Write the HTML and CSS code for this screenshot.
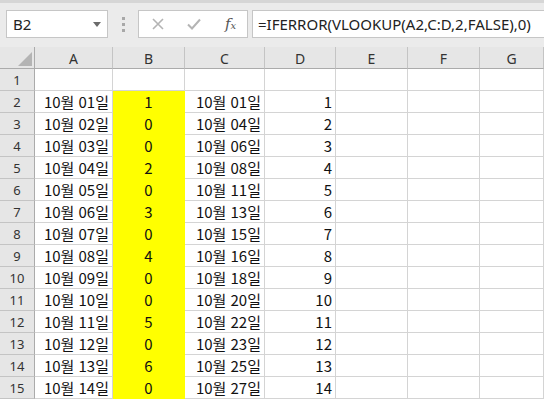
FILE: index.html
```html
<!DOCTYPE html>
<html lang="ko">
<head>
<meta charset="utf-8">
<link rel="stylesheet" href="styles.css">
</head>
<body>
<div class="app">
  <div class="toolbar">
    <div class="namebox"><span class="ref">B2</span><span class="caret"></span></div>
    <div class="dots"><i></i><i></i><i></i></div>
    <div class="fbtns">
      <svg class="ic" width="12" height="12" viewBox="0 0 12 12"><path d="M1 1L11 11M11 1L1 11" stroke="#b4b4b4" stroke-width="1.6" fill="none"/></svg>
      <svg class="ic" width="14" height="12" viewBox="0 0 14 12"><path d="M1 6.5L5 10.5L13 1.5" stroke="#b4b4b4" stroke-width="2" fill="none"/></svg>
      <span class="fx">f<sub>x</sub></span>
    </div>
    <div class="formula">=IFERROR(VLOOKUP(A2,C:D,2,FALSE),0)</div>
  </div>
  <div class="sheet" id="sheet">
    <div class="corner"><span class="tri"></span></div>
    <div class="ch">A</div><div class="ch">B</div><div class="ch">C</div><div class="ch">D</div><div class="ch">E</div><div class="ch">F</div><div class="ch">G</div>

    <div class="rh">1</div><div class="c"></div><div class="c"></div><div class="c"></div><div class="c"></div><div class="c"></div><div class="c"></div><div class="c"></div>
    <div class="rh">2</div><div class="c r">10월 01일</div><div class="c y">1</div><div class="c r">10월 01일</div><div class="c r">1</div><div class="c"></div><div class="c"></div><div class="c"></div>
    <div class="rh">3</div><div class="c r">10월 02일</div><div class="c y">0</div><div class="c r">10월 04일</div><div class="c r">2</div><div class="c"></div><div class="c"></div><div class="c"></div>
    <div class="rh">4</div><div class="c r">10월 03일</div><div class="c y">0</div><div class="c r">10월 06일</div><div class="c r">3</div><div class="c"></div><div class="c"></div><div class="c"></div>
    <div class="rh">5</div><div class="c r">10월 04일</div><div class="c y">2</div><div class="c r">10월 08일</div><div class="c r">4</div><div class="c"></div><div class="c"></div><div class="c"></div>
    <div class="rh">6</div><div class="c r">10월 05일</div><div class="c y">0</div><div class="c r">10월 11일</div><div class="c r">5</div><div class="c"></div><div class="c"></div><div class="c"></div>
    <div class="rh">7</div><div class="c r">10월 06일</div><div class="c y">3</div><div class="c r">10월 13일</div><div class="c r">6</div><div class="c"></div><div class="c"></div><div class="c"></div>
    <div class="rh">8</div><div class="c r">10월 07일</div><div class="c y">0</div><div class="c r">10월 15일</div><div class="c r">7</div><div class="c"></div><div class="c"></div><div class="c"></div>
    <div class="rh">9</div><div class="c r">10월 08일</div><div class="c y">4</div><div class="c r">10월 16일</div><div class="c r">8</div><div class="c"></div><div class="c"></div><div class="c"></div>
    <div class="rh">10</div><div class="c r">10월 09일</div><div class="c y">0</div><div class="c r">10월 18일</div><div class="c r">9</div><div class="c"></div><div class="c"></div><div class="c"></div>
    <div class="rh">11</div><div class="c r">10월 10일</div><div class="c y">0</div><div class="c r">10월 20일</div><div class="c r">10</div><div class="c"></div><div class="c"></div><div class="c"></div>
    <div class="rh">12</div><div class="c r">10월 11일</div><div class="c y">5</div><div class="c r">10월 22일</div><div class="c r">11</div><div class="c"></div><div class="c"></div><div class="c"></div>
    <div class="rh">13</div><div class="c r">10월 12일</div><div class="c y">0</div><div class="c r">10월 23일</div><div class="c r">12</div><div class="c"></div><div class="c"></div><div class="c"></div>
    <div class="rh">14</div><div class="c r">10월 13일</div><div class="c y">6</div><div class="c r">10월 25일</div><div class="c r">13</div><div class="c"></div><div class="c"></div><div class="c"></div>
    <div class="rh">15</div><div class="c r">10월 14일</div><div class="c y">0</div><div class="c r">10월 27일</div><div class="c r">14</div><div class="c"></div><div class="c"></div><div class="c"></div>
  </div>
</div>
</body>
</html>
```
FILE: styles.css
```css
* { box-sizing: border-box; }
html, body { margin: 0; padding: 0; }
body {
  width: 544px;
  height: 400px;
  overflow: hidden;
  background: #ffffff;
  font-family: "Noto Sans CJK KR", "Noto Sans", sans-serif;
  color: #111;
}
.app { width: 544px; height: 400px; overflow: hidden; }

.toolbar {
  height: 47px;
  background: #ebebeb;
  border-top: 3px solid #d6d6d6;
  display: flex;
  align-items: flex-start;
  padding: 7px 0 0 6px;
}
.namebox {
  width: 102px;
  height: 28px;
  background: #fff;
  border: 1px solid #c6c6c6;
  display: flex;
  align-items: center;
  justify-content: space-between;
  padding: 0 6px 0 6px;
}
.ref { font-family: "Noto Sans", sans-serif; font-size: 15px; color: #222; line-height: 1; }
.caret {
  width: 0; height: 0;
  border-left: 4.5px solid transparent;
  border-right: 4.5px solid transparent;
  border-top: 5px solid #6b6b6b;
}
.dots {
  width: 30px;
  height: 28px;
  display: flex;
  flex-direction: column;
  align-items: center;
  justify-content: center;
  gap: 3px;
}
.dots i { display: block; width: 3px; height: 3px; background: #a8a8a8; }
.fbtns {
  width: 110px;
  height: 28px;
  background: #fff;
  border: 1px solid #c6c6c6;
  display: flex;
  align-items: center;
  padding-left: 13px;
  gap: 23px;
}
.fx {
  font-family: "DejaVu Serif", serif;
  font-style: italic;
  font-size: 15px;
  color: #555;
  line-height: 1;
  margin-left: 1px;
}
.fx sub { font-size: 10px; vertical-align: 0; }
.formula {
  flex: 1;
  height: 28px;
  margin-left: 4px;
  background: #fff;
  border: 1px solid #c6c6c6;
  border-right: none;
  font-family: "Noto Sans", sans-serif;
  font-size: 15px;
  color: #222;
  line-height: 26px;
  padding-left: 5px;
  white-space: nowrap;
  overflow: hidden;
}

.sheet {
  display: grid;
  grid-template-columns: 35px 78px 72px 80px 71px 72px 72px 1fr;
  grid-auto-rows: 22px;
}
.corner {
  background: #e6e6e6;
  border-right: 1px solid #ababab;
  border-bottom: 1px solid #ababab;
  position: relative;
}
.tri {
  position: absolute;
  right: 2px;
  bottom: 2px;
  width: 0; height: 0;
  border-left: 14px solid transparent;
  border-bottom: 14px solid #b4b4b4;
}
.ch {
  background: #e6e6e6;
  border-right: 1px solid #c4c4c4;
  border-bottom: 1px solid #ababab;
  font-family: "Noto Sans", sans-serif;
  font-size: 14px;
  color: #333;
  display: flex;
  align-items: center;
  justify-content: center;
  padding-top: 1px;
}
.rh {
  background: #e6e6e6;
  border-right: 1px solid #ababab;
  border-bottom: 1px solid #c4c4c4;
  font-family: "Noto Sans", sans-serif;
  font-size: 13px;
  color: #333;
  display: flex;
  align-items: center;
  justify-content: center;
}
.c {
  border-right: 1px solid #d4d4d4;
  border-bottom: 1px solid #d4d4d4;
  font-size: 15px;
  line-height: 21px;
  white-space: nowrap;
  overflow: hidden;
  color: #111;
}
.r { text-align: right; padding-right: 3px; }
.y { background: #ffff00; text-align: center; border-color: #ffff00; }
```
